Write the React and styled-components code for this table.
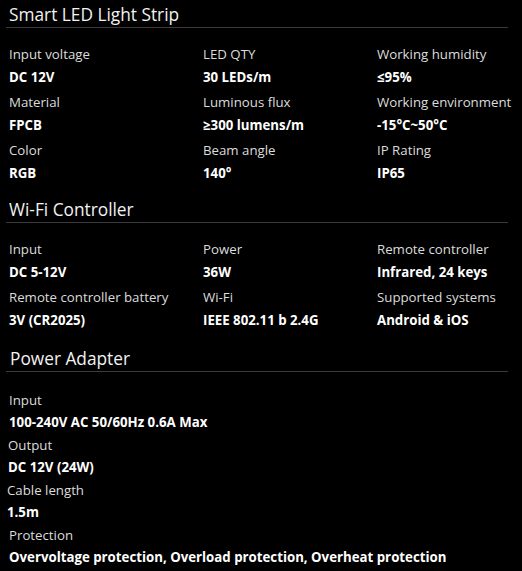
import React from "react";
import styled, { createGlobalStyle } from "styled-components";

const GlobalStyle = createGlobalStyle`
    body {
        margin: 0;
        background: #000;
        font-family: "Open Sans", "Noto Sans", sans-serif;
    }
`;

const StyledPage = styled.div`
    width: 522px;
    min-height: 571px;
    padding: 3px 14px 0 6px;
    box-sizing: border-box;
    background: #000;
    color: #fff;
`;

const StyledSection = styled.section`
    margin-top: ${(props) => props.gap}px;
`;

const StyledTitle = styled.h2`
    margin: 0;
    padding-left: ${(props) => props.indent || 3}px;
    font-size: 17.3px;
    font-weight: 400;
    line-height: 24px;
    color: #f2f2f2;
    border-bottom: 1px solid #3a3a3a;
`;

const StyledGrid = styled.div`
    display: grid;
    grid-template-columns: 194px 174px 1fr;
    row-gap: 2px;
    padding: 15px 0 0 3px;
`;

const StyledList = styled.div`
    display: flex;
    flex-direction: column;
    gap: 1px;
    padding-top: 17px;
`;

const StyledItem = styled.div`
    display: flex;
    flex-direction: column;
    padding-left: ${(props) => props.shift || 0}px;
`;

const StyledLabel = styled.span`
    font-size: 13.25px;
    line-height: ${(props) => (props.tight ? 22 : 23)}px;
    color: #dcdcdc;
    white-space: nowrap;
`;

const StyledValue = styled.span`
    font-size: 13.25px;
    font-weight: 700;
    line-height: ${(props) => (props.tight ? 22 : 23)}px;
    color: #fff;
    white-space: nowrap;
`;

const ledStrip = [
    ["Input voltage", "DC 12V"],
    ["LED QTY", "30 LEDs/m"],
    ["Working humidity", "≤95%"],
    ["Material", "FPCB"],
    ["Luminous flux", "≥300 lumens/m"],
    ["Working environment", "-15°C~50°C"],
    ["Color", "RGB"],
    ["Beam angle", "140°"],
    ["IP Rating", "IP65"],
];

const controller = [
    ["Input", "DC 5-12V"],
    ["Power", "36W"],
    ["Remote controller", "Infrared, 24 keys"],
    ["Remote controller battery", "3V (CR2025)"],
    ["Wi-Fi", "IEEE 802.11 b 2.4G"],
    ["Supported systems", "Android & iOS"],
];

const adapter = [
    ["Input", "100-240V AC 50/60Hz 0.6A Max", 3],
    ["Output", "DC 12V (24W)", 2],
    ["Cable length", "1.5m", 1],
    ["Protection", "Overvoltage protection, Overload protection, Overheat protection", 3],
];

const SpecGrid = ({ items }) => (
    <StyledGrid>
        {items.map(([label, value]) => (
            <StyledItem key={label + value}>
                <StyledLabel>{label}</StyledLabel>
                <StyledValue>{value}</StyledValue>
            </StyledItem>
        ))}
    </StyledGrid>
);

const App = () => {
    return (
        <StyledPage>
            <GlobalStyle />
            <StyledSection gap={0}>
                <StyledTitle>Smart LED Light Strip</StyledTitle>
                <SpecGrid items={ledStrip} />
            </StyledSection>
            <StyledSection gap={13}>
                <StyledTitle>Wi-Fi Controller</StyledTitle>
                <SpecGrid items={controller} />
            </StyledSection>
            <StyledSection gap={15}>
                <StyledTitle indent={4}>Power Adapter</StyledTitle>
                <StyledList>
                    {adapter.map(([label, value, shift]) => (
                        <StyledItem key={label} shift={shift}>
                            <StyledLabel tight>{label}</StyledLabel>
                            <StyledValue tight>{value}</StyledValue>
                        </StyledItem>
                    ))}
                </StyledList>
            </StyledSection>
        </StyledPage>
    );
};

export default App;
